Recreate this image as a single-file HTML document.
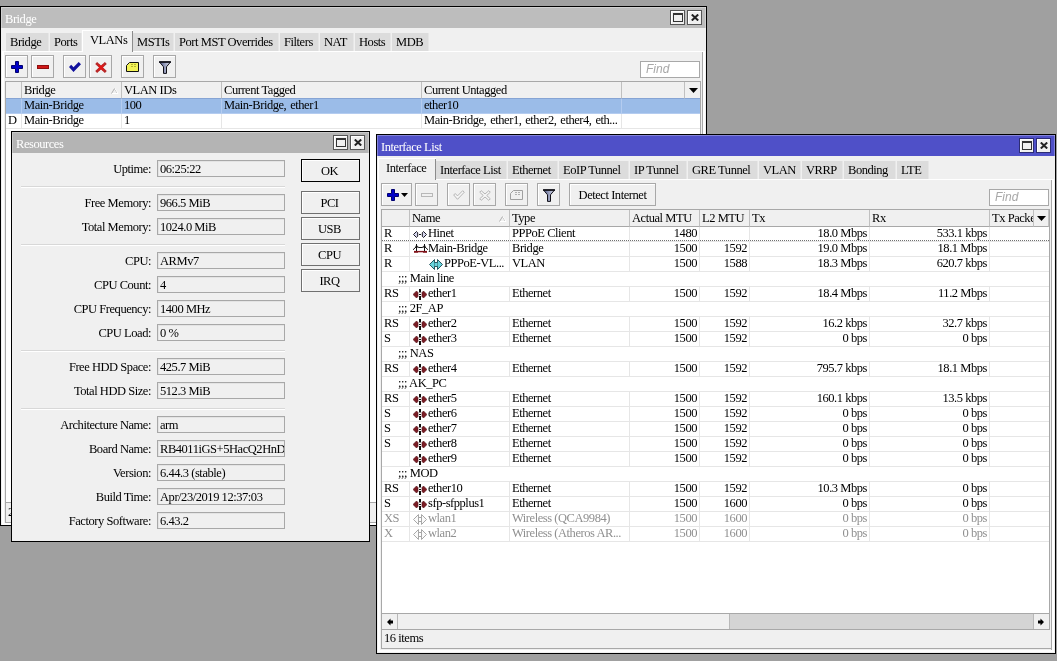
<!DOCTYPE html><html><head><meta charset="utf-8"><title>WinBox</title><style>
*{box-sizing:border-box;margin:0;padding:0}
html,body{width:1057px;height:661px;overflow:hidden;background:#a0a0a0}
body{font-family:"Liberation Serif",serif;font-size:12.5px;letter-spacing:-0.45px;color:#000;position:relative;line-height:15px;will-change:transform}
.a{position:absolute;white-space:nowrap}
.win{position:absolute;background:#f0f0f0;border:1px solid #000;overflow:hidden}
.tb{position:absolute;left:0;top:0;right:0;height:21px;box-shadow:inset 1px 1px 0 rgba(255,255,255,.3),inset -1px 0 0 rgba(255,255,255,.3);background:#bdbdbd;color:#fff;padding-left:4px;padding-top:1px;line-height:23px}
.tb.act{background:#4f50c8}
.actw .wb{border-color:#2c2c74}
.wb{position:absolute;width:15px;height:15px;border:1px solid #555;background:#f0f0f0;box-shadow:inset 1px 1px 0 #fff}
.tab{position:absolute;background:#dcdcdc;height:18px;line-height:18px;text-align:left;padding-left:4px;border-right:1px solid #e6e6e6;overflow:hidden}
.tab.on{background:#f0f0f0;border:none;border-top:1px solid #fff;border-left:1px solid #fff;height:22px;line-height:19px;padding-left:7px;z-index:2}
.tab.on i{position:absolute;right:0;top:0;width:1px;height:21px;background:#8c8c8c}
.btn{position:absolute;background:#f0f0f0;border:1px solid #a8a8a8;box-shadow:inset 1px 1px 0 #fff}
.find{position:absolute;background:#fff;border:1px solid #a8a8a8;font-family:"Liberation Sans",sans-serif;font-style:italic;color:#a8a8a8;font-size:12px;letter-spacing:0;padding-left:5px;line-height:15px}
.tbl{position:absolute;background:#fff;border:1px solid #a8a8a8;overflow:hidden}
.hd{position:absolute;top:0;height:16px;background:#f0f0f0;border-right:1px solid #c0c0c0;border-bottom:1px solid #c0c0c0;line-height:16px;padding-left:2px;overflow:hidden;white-space:nowrap}
.c{position:absolute;height:15px;line-height:13px;white-space:nowrap;overflow:hidden;border-right:1px solid #e6e6e6;border-bottom:1px solid #e6e6e6;padding-left:2px}
.c.r{text-align:right;padding-right:2px;padding-left:0}
.lbl{position:absolute;text-align:right;white-space:nowrap;line-height:17px;height:17px}
.fld{position:absolute;height:17px;border:1px solid #a8a8a8;background:#f0f0f0;line-height:15px;padding-left:2px;padding-top:1px;white-space:nowrap;overflow:hidden;box-shadow:inset 1px 1px 0 #e4e4e4}
.sep{position:absolute;height:2px;border-top:1px solid #d8d8d8;border-bottom:1px solid #fff}
.dis{color:#909090}
</style></head><body>
<div class="win" style="left:0;top:6px;width:707px;height:520px">
<div class="tb">Bridge</div>
<div class="wb" style="left:669px;top:3px"><svg class="a" style="left:2px;top:2px" width="10" height="9" viewBox="0 0 10 9"><rect x="0.5" y="1" width="9" height="7.5" fill="none" stroke="#333"/><rect x="0" y="0" width="10" height="2" fill="#333"/></svg></div><div class="wb" style="left:686px;top:3px"><svg class="a" style="left:3px;top:3px" width="8" height="7" viewBox="0 0 8 7"><path d="M0.8 0.5 L7.2 6.5 M7.2 0.5 L0.8 6.5" stroke="#222" stroke-width="2"/></svg></div>
<div class="tab" style="left:5px;top:26px;width:43px">Bridge</div><div class="tab" style="left:49px;top:26px;width:32px">Ports</div><div class="tab on" style="left:81px;top:23px;width:51px">VLANs<i></i></div><div class="tab" style="left:132px;top:26px;width:41px">MSTIs</div><div class="tab" style="left:174px;top:26px;width:104px">Port MST Overrides</div><div class="tab" style="left:279px;top:26px;width:39px">Filters</div><div class="tab" style="left:319px;top:26px;width:34px">NAT</div><div class="tab" style="left:354px;top:26px;width:36px">Hosts</div><div class="tab" style="left:391px;top:26px;width:37px">MDB</div>
<div class="a" style="left:1px;top:44px;width:703px;height:474px;border:2px solid #fff;border-top-width:1px;box-shadow:inset -1px 0 0 #a8a8a8"></div>
<div class="btn" style="left:4px;top:48px;width:23px;height:23px"><svg class="a" style="left:5px;top:5px" width="12" height="12" viewBox="0 0 12 12"><path d="M4.5 0.5h3v4h4v3h-4v4h-3v-4h-4v-3h4z" fill="#0000c8" stroke="#000070" stroke-width="1"/></svg></div>
<div class="btn" style="left:30px;top:48px;width:23px;height:23px"><svg class="a" style="left:5px;top:9px" width="12" height="4" viewBox="0 0 12 4"><rect x="0" y="0" width="12" height="4" fill="#d01818"/><rect x="0.5" y="0.5" width="11" height="3" fill="none" stroke="#901010" stroke-width="1"/></svg></div>
<div class="btn" style="left:62px;top:48px;width:23px;height:23px"><svg class="a" style="left:5px;top:6px" width="12" height="10" viewBox="0 0 12 10"><path d="M0 5 L2.2 2.8 L4.5 5.2 L9.7 0 L12 2.2 L4.5 10 Z" fill="#10109c"/></svg></div>
<div class="btn" style="left:88px;top:48px;width:23px;height:23px"><svg class="a" style="left:5px;top:6px" width="12" height="11" viewBox="0 0 12 11"><path d="M2.1 0 L6 3.6 L9.9 0 L11.8 2 L8 5.5 L11.8 9 L9.9 11 L6 7.4 L2.1 11 L0.2 9 L4 5.5 L0.2 2 Z" fill="#b82828"/><path d="M3.5 3 L8.5 8 M8.5 3 L3.5 8" stroke="#e01818" stroke-width="2"/></svg></div>
<div class="btn" style="left:120px;top:48px;width:23px;height:23px"><svg class="a" style="left:4px;top:6px" width="13" height="10" viewBox="0 0 13 10"><path d="M3.5 0.5 H12.5 V9.5 H0.5 V3.5 Z" fill="#f4f458" stroke="#101010" stroke-width="1"/><path d="M5 2.5 H10.5 M5 4.5 H10.5" stroke="#b8b830" stroke-width="1" stroke-dasharray="2 1"/></svg></div>
<div class="btn" style="left:152px;top:48px;width:23px;height:23px"><svg class="a" style="left:5px;top:5px" width="13" height="13" viewBox="0 0 13 13"><defs><linearGradient id="fg1" x1="0" x2="1" y1="0" y2="0"><stop offset="0.2" stop-color="#6c749c"/><stop offset="0.8" stop-color="#c4c8dc"/></linearGradient></defs><path d="M0.5 1 H11.5 L7.5 5.8 V12.4 H4.5 V5.8 Z" fill="url(#fg1)" stroke="#101018" stroke-width="1" stroke-linejoin="round"/><path d="M0 1 H12" stroke="#101018" stroke-width="1.6"/></svg></div>
<div class="find" style="left:639px;top:54px;width:60px;height:17px">Find</div>
<div class="tbl" style="left:4px;top:74px;width:696px;height:422px">
<div class="hd" style="left:0px;width:16px;height:17px;border-bottom-color:#86a4d4;z-index:2"></div>
<div class="hd" style="left:16px;width:100px;height:17px;border-bottom-color:#86a4d4;z-index:2">Bridge</div>
<div class="hd" style="left:116px;width:100px;height:17px;border-bottom-color:#86a4d4;z-index:2">VLAN IDs</div>
<div class="hd" style="left:216px;width:200px;height:17px;border-bottom-color:#86a4d4;z-index:2">Current Tagged</div>
<div class="hd" style="left:416px;width:200px;height:17px;border-bottom-color:#86a4d4;z-index:2">Current Untagged</div>
<div class="hd" style="left:616px;width:63px;height:17px;border-bottom-color:#86a4d4;z-index:2"></div>
<div class="hd" style="left:679px;width:16px;height:17px;border-bottom-color:#86a4d4;z-index:2"></div>
<svg class="a" style="left:105px;top:6px;z-index:3" width="8" height="6" viewBox="0 0 8 6"><path d="M0.5 5.5 L3.5 0.5 L6.5 5.5" fill="none" stroke="#b0b0b0"/><path d="M4 0.5 L7 5.5 H1" fill="none" stroke="#fff"/></svg>
<svg class="a" style="left:683px;top:6px;z-index:3" width="9" height="5" viewBox="0 0 9 5"><path d="M0 0h9l-4.5 5z" fill="#000"/></svg>
<div class="a" style="left:0;top:17px;width:695px;height:15px;background:#9bbce8"></div>
<div class="c" style="left:0px;top:17px;width:16px;word-spacing:1.2px;background:#9bbce8;border-color:#b4ccf0;"></div>
<div class="c" style="left:16px;top:17px;width:100px;word-spacing:1.2px;background:#9bbce8;border-color:#b4ccf0;">Main-Bridge</div>
<div class="c" style="left:116px;top:17px;width:100px;word-spacing:1.2px;background:#9bbce8;border-color:#b4ccf0;">100</div>
<div class="c" style="left:216px;top:17px;width:200px;word-spacing:1.2px;background:#9bbce8;border-color:#b4ccf0;">Main-Bridge, ether1</div>
<div class="c" style="left:416px;top:17px;width:200px;word-spacing:1.2px;background:#9bbce8;border-color:#b4ccf0;">ether10</div>
<div class="c" style="left:616px;top:17px;width:80px;word-spacing:1.2px;background:#9bbce8;border-color:#b4ccf0;"></div>
<div class="a" style="left:0;top:32px;width:695px;height:15px;"></div>
<div class="c" style="left:0px;top:32px;width:16px;word-spacing:1.2px;">D</div>
<div class="c" style="left:16px;top:32px;width:100px;word-spacing:1.2px;">Main-Bridge</div>
<div class="c" style="left:116px;top:32px;width:100px;word-spacing:1.2px;">1</div>
<div class="c" style="left:216px;top:32px;width:200px;word-spacing:1.2px;"></div>
<div class="c" style="left:416px;top:32px;width:200px;word-spacing:1.2px;">Main-Bridge, ether1, ether2, ether4, eth...</div>
<div class="c" style="left:616px;top:32px;width:80px;word-spacing:1.2px;"></div>
</div>
<div class="a" style="left:4px;top:496px;width:698px;height:20px;border-left:1px solid #a8a8a8;border-bottom:1px solid #a8a8a8;padding-left:2px;line-height:18px">2 items</div>
</div>
<div class="win" style="left:11px;top:131px;width:359px;height:411px;">
<div class="tb" style="background:#b4b4b4">Resources</div>
<div class="wb" style="left:321px;top:3px"><svg class="a" style="left:2px;top:2px" width="10" height="9" viewBox="0 0 10 9"><rect x="0.5" y="1" width="9" height="7.5" fill="none" stroke="#333"/><rect x="0" y="0" width="10" height="2" fill="#333"/></svg></div><div class="wb" style="left:338px;top:3px"><svg class="a" style="left:3px;top:3px" width="8" height="7" viewBox="0 0 8 7"><path d="M0.8 0.5 L7.2 6.5 M7.2 0.5 L0.8 6.5" stroke="#222" stroke-width="2"/></svg></div>
<div class="lbl" style="left:8px;width:131px;top:29px">Uptime:</div>
<div class="fld" style="left:145px;width:128px;top:28px">06:25:22</div>
<div class="lbl" style="left:8px;width:131px;top:63px">Free Memory:</div>
<div class="fld" style="left:145px;width:128px;top:62px">966.5 MiB</div>
<div class="lbl" style="left:8px;width:131px;top:87px">Total Memory:</div>
<div class="fld" style="left:145px;width:128px;top:86px">1024.0 MiB</div>
<div class="lbl" style="left:8px;width:131px;top:121px">CPU:</div>
<div class="fld" style="left:145px;width:128px;top:120px">ARMv7</div>
<div class="lbl" style="left:8px;width:131px;top:145px">CPU Count:</div>
<div class="fld" style="left:145px;width:128px;top:144px">4</div>
<div class="lbl" style="left:8px;width:131px;top:169px">CPU Frequency:</div>
<div class="fld" style="left:145px;width:128px;top:168px">1400 MHz</div>
<div class="lbl" style="left:8px;width:131px;top:193px">CPU Load:</div>
<div class="fld" style="left:145px;width:128px;top:192px">0 %</div>
<div class="lbl" style="left:8px;width:131px;top:227px">Free HDD Space:</div>
<div class="fld" style="left:145px;width:128px;top:226px">425.7 MiB</div>
<div class="lbl" style="left:8px;width:131px;top:251px">Total HDD Size:</div>
<div class="fld" style="left:145px;width:128px;top:250px">512.3 MiB</div>
<div class="lbl" style="left:8px;width:131px;top:285px">Architecture Name:</div>
<div class="fld" style="left:145px;width:128px;top:284px">arm</div>
<div class="lbl" style="left:8px;width:131px;top:309px">Board Name:</div>
<div class="fld" style="left:145px;width:128px;top:308px">RB4011iGS+5HacQ2HnD</div>
<div class="lbl" style="left:8px;width:131px;top:333px">Version:</div>
<div class="fld" style="left:145px;width:128px;top:332px">6.44.3 (stable)</div>
<div class="lbl" style="left:8px;width:131px;top:357px">Build Time:</div>
<div class="fld" style="left:145px;width:128px;top:356px">Apr/23/2019 12:37:03</div>
<div class="lbl" style="left:8px;width:131px;top:381px">Factory Software:</div>
<div class="fld" style="left:145px;width:128px;top:380px">6.43.2</div>
<div class="sep" style="left:9px;width:264px;top:54px"></div>
<div class="sep" style="left:9px;width:264px;top:112px"></div>
<div class="sep" style="left:9px;width:264px;top:218px"></div>
<div class="sep" style="left:9px;width:264px;top:276px"></div>
<div class="btn" style="left:289px;top:27px;width:59px;height:23px;text-align:center;line-height:21px;padding-top:1px;padding-right:2px;border-color:#000;">OK</div>
<div class="btn" style="left:289px;top:59px;width:59px;height:23px;text-align:center;line-height:21px;padding-top:1px;padding-right:2px;border-color:#707070;">PCI</div>
<div class="btn" style="left:289px;top:85px;width:59px;height:23px;text-align:center;line-height:21px;padding-top:1px;padding-right:2px;border-color:#707070;">USB</div>
<div class="btn" style="left:289px;top:111px;width:59px;height:23px;text-align:center;line-height:21px;padding-top:1px;padding-right:2px;border-color:#707070;">CPU</div>
<div class="btn" style="left:289px;top:137px;width:59px;height:23px;text-align:center;line-height:21px;padding-top:1px;padding-right:2px;border-color:#707070;">IRQ</div>
</div>
<div class="win actw" style="left:376px;top:134px;width:680px;height:520px">
<div class="tb act">Interface List</div>
<div class="wb" style="left:642px;top:3px"><svg class="a" style="left:2px;top:2px" width="10" height="9" viewBox="0 0 10 9"><rect x="0.5" y="1" width="9" height="7.5" fill="none" stroke="#333"/><rect x="0" y="0" width="10" height="2" fill="#333"/></svg></div><div class="wb" style="left:659px;top:3px"><svg class="a" style="left:3px;top:3px" width="8" height="7" viewBox="0 0 8 7"><path d="M0.8 0.5 L7.2 6.5 M7.2 0.5 L0.8 6.5" stroke="#222" stroke-width="2"/></svg></div>
<div class="tab on" style="left:1px;top:23px;width:58px">Interface<i></i></div><div class="tab" style="left:59px;top:26px;width:71px">Interface List</div><div class="tab" style="left:131px;top:26px;width:50px">Ethernet</div><div class="tab" style="left:182px;top:26px;width:70px">EoIP Tunnel</div><div class="tab" style="left:253px;top:26px;width:57px">IP Tunnel</div><div class="tab" style="left:311px;top:26px;width:70px">GRE Tunnel</div><div class="tab" style="left:382px;top:26px;width:42px">VLAN</div><div class="tab" style="left:425px;top:26px;width:41px">VRRP</div><div class="tab" style="left:467px;top:26px;width:52px">Bonding</div><div class="tab" style="left:520px;top:26px;width:32px">LTE</div>
<div class="a" style="left:1px;top:44px;width:676px;height:473px;border:2px solid #fff;border-top-width:1px;box-shadow:inset -1px 0 0 #a8a8a8"></div>
<div class="btn" style="left:4px;top:48px;width:31px;height:23px"><svg class="a" style="left:5px;top:5px" width="12" height="12" viewBox="0 0 12 12"><path d="M4.5 0.5h3v4h4v3h-4v4h-3v-4h-4v-3h4z" fill="#0000c8" stroke="#000070" stroke-width="1"/></svg><svg class="a" style="left:19px;top:9px" width="7" height="4" viewBox="0 0 7 4"><path d="M0 0h7l-3.5 4z" fill="#000"/></svg></div>
<div class="btn" style="left:38px;top:48px;width:23px;height:23px"><svg class="a" style="left:5px;top:9px" width="12" height="4" viewBox="0 0 12 4"><rect x="0.5" y="0.5" width="11" height="3" fill="#f0f0f0" stroke="#b8b8b8"/></svg></div>
<div class="btn" style="left:70px;top:48px;width:23px;height:23px"><svg class="a" style="left:5px;top:6px" width="12" height="10" viewBox="0 0 12 10"><path d="M0.7 5 L2.2 3.5 L4.5 5.9 L9.7 0.7 L11.3 2.2 L4.5 9.3 Z" fill="#f6f6f6" stroke="#b4b4b4" stroke-width="1"/></svg></div>
<div class="btn" style="left:96px;top:48px;width:23px;height:23px"><svg class="a" style="left:5px;top:6px" width="12" height="11" viewBox="0 0 12 11"><path d="M2.2 0.7 L6 4 L9.8 0.7 L11.3 2.2 L7.7 5.5 L11.3 8.8 L9.8 10.3 L6 7 L2.2 10.3 L0.7 8.8 L4.3 5.5 L0.7 2.2 Z" fill="#f6f6f6" stroke="#b4b4b4" stroke-width="1"/></svg></div>
<div class="btn" style="left:128px;top:48px;width:23px;height:23px"><svg class="a" style="left:4px;top:6px" width="13" height="10" viewBox="0 0 13 10"><path d="M3.5 0.5 H12.5 V9.5 H0.5 V3.5 Z" fill="#f0f0f0" stroke="#a0a0a0" stroke-width="1"/><path d="M5 2.5 H10.5 M5 4.5 H10.5" stroke="#b0b0b0" stroke-width="1" stroke-dasharray="2 1"/></svg></div>
<div class="btn" style="left:160px;top:48px;width:23px;height:23px"><svg class="a" style="left:5px;top:5px" width="13" height="13" viewBox="0 0 13 13"><defs><linearGradient id="fg2" x1="0" x2="1" y1="0" y2="0"><stop offset="0.2" stop-color="#6c749c"/><stop offset="0.8" stop-color="#c4c8dc"/></linearGradient></defs><path d="M0.5 1 H11.5 L7.5 5.8 V12.4 H4.5 V5.8 Z" fill="url(#fg2)" stroke="#101018" stroke-width="1" stroke-linejoin="round"/><path d="M0 1 H12" stroke="#101018" stroke-width="1.6"/></svg></div>
<div class="btn" style="left:192px;top:48px;width:87px;height:23px;text-align:center;line-height:21px;padding-top:1px">Detect Internet</div>
<div class="find" style="left:612px;top:54px;width:60px;height:17px">Find</div>
<div class="tbl" style="left:4px;top:74px;width:669px;height:421px">
<div class="hd" style="left:0px;width:28px;height:17px;line-height:16px;border-bottom-color:#a8a8a8;z-index:2"></div>
<div class="hd" style="left:28px;width:100px;height:17px;line-height:16px;border-bottom-color:#a8a8a8;z-index:2">Name</div>
<div class="hd" style="left:128px;width:120px;height:17px;line-height:16px;border-bottom-color:#a8a8a8;z-index:2">Type</div>
<div class="hd" style="left:248px;width:70px;height:17px;line-height:16px;border-bottom-color:#a8a8a8;z-index:2">Actual MTU</div>
<div class="hd" style="left:318px;width:50px;height:17px;line-height:16px;border-bottom-color:#a8a8a8;z-index:2">L2 MTU</div>
<div class="hd" style="left:368px;width:120px;height:17px;line-height:16px;border-bottom-color:#a8a8a8;z-index:2">Tx</div>
<div class="hd" style="left:488px;width:120px;height:17px;line-height:16px;border-bottom-color:#a8a8a8;z-index:2">Rx</div>
<div class="hd" style="left:608px;width:60px;height:17px;line-height:16px;border-bottom-color:#a8a8a8;z-index:2">Tx Packe</div>
<div class="hd" style="left:651px;width:16px;height:17px;border-left:1px solid #c0c0c0;border-bottom-color:#a8a8a8;z-index:2"></div>
<svg class="a" style="left:117px;top:6px;z-index:3" width="8" height="6" viewBox="0 0 8 6"><path d="M0.5 5.5 L3.5 0.5 L6.5 5.5" fill="none" stroke="#b0b0b0"/><path d="M4 0.5 L7 5.5 H1" fill="none" stroke="#fff"/></svg>
<svg class="a" style="left:655px;top:6px;z-index:3" width="9" height="5" viewBox="0 0 9 5"><path d="M0 0h9l-4.5 5z" fill="#000"/></svg>
<div class="c" style="left:0px;top:17px;width:28px;">R</div>
<div class="c" style="left:28px;top:17px;width:100px;padding-left:18px;"><svg class="a" style="left:3px;top:4px" width="14" height="7" viewBox="0 0 14 7"><path d="M0.5 3.5 L3.5 0.5 L4.7 1.8 V5.2 L3.5 6.5 Z M13.5 3.5 L10.5 0.5 L9.3 1.8 V5.2 L10.5 6.5 Z" fill="#d8d8f0" stroke="#181820" stroke-width="1"/><path d="M6 3.5 H8" stroke="#181820" stroke-width="1"/></svg>Hinet</div>
<div class="c" style="left:128px;top:17px;width:120px;">PPPoE Client</div>
<div class="c r" style="left:248px;top:17px;width:70px;">1480</div>
<div class="c r" style="left:318px;top:17px;width:50px;"></div>
<div class="c r" style="left:368px;top:17px;width:120px;">18.0 Mbps</div>
<div class="c r" style="left:488px;top:17px;width:120px;">533.1 kbps</div>
<div class="c" style="left:608px;top:17px;width:60px;"></div>
<div class="c" style="left:0px;top:32px;width:28px;">R</div>
<div class="c" style="left:28px;top:32px;width:100px;padding-left:18px;"><svg class="a" style="left:3px;top:2px" width="16" height="9" viewBox="0 0 16 9"><path d="M1 7.6 H14" stroke="#801018" stroke-width="1.4"/><path d="M1 8.2 H5 M10 8.2 H14" stroke="#801018" stroke-width="1"/><path d="M3.5 0 V7 M11.5 0 V7 M3.5 2.5 L0 5.8 M11.5 2.5 L15 5.8 M3.5 2.5 L6 3.5 H9 L11.5 2.5" fill="none" stroke="#101010" stroke-width="1"/><path d="M3.5 1.8 V3.4 M11.5 1.8 V3.4" stroke="#101010" stroke-width="2"/></svg>Main-Bridge</div>
<div class="c" style="left:128px;top:32px;width:120px;">Bridge</div>
<div class="c r" style="left:248px;top:32px;width:70px;">1500</div>
<div class="c r" style="left:318px;top:32px;width:50px;">1592</div>
<div class="c r" style="left:368px;top:32px;width:120px;">19.0 Mbps</div>
<div class="c r" style="left:488px;top:32px;width:120px;">18.1 Mbps</div>
<div class="c" style="left:608px;top:32px;width:60px;"></div>
<div class="c" style="left:0px;top:47px;width:28px;">R</div>
<div class="c" style="left:28px;top:47px;width:100px;padding-left:34px;"><svg class="a" style="left:19px;top:2px" width="14" height="11" viewBox="0 0 14 11"><path d="M0.5 5.5 L5.5 0.5 V10.5 Z M13.5 5.5 L8.5 0.5 V10.5 Z" fill="#68d4dc" stroke="#285860" stroke-width="1"/><rect x="5.5" y="3.5" width="3" height="4" fill="#68d4dc"/><path d="M5.5 3.5 H8.5 M5.5 7.5 H8.5" stroke="#285860" stroke-width="1"/></svg>PPPoE-VL...</div>
<div class="c" style="left:128px;top:47px;width:120px;">VLAN</div>
<div class="c r" style="left:248px;top:47px;width:70px;">1500</div>
<div class="c r" style="left:318px;top:47px;width:50px;">1588</div>
<div class="c r" style="left:368px;top:47px;width:120px;">18.3 Mbps</div>
<div class="c r" style="left:488px;top:47px;width:120px;">620.7 kbps</div>
<div class="c" style="left:608px;top:47px;width:60px;"></div>
<div class="c" style="left:0;top:62px;width:668px;padding-left:16px">;;; Main line</div>
<div class="c" style="left:0px;top:77px;width:28px;">RS</div>
<div class="c" style="left:28px;top:77px;width:100px;padding-left:18px;"><svg class="a" style="left:3px;top:2px" width="14" height="11" viewBox="0 0 14 11"><path d="M0 5.5 L3.5 2 L5 3.5 V7.5 L3.5 9 Z M14 5.5 L10.5 2 L9 3.5 V7.5 L10.5 9 Z" fill="#7a1c24" stroke="#50101a" stroke-width="0.6"/><path d="M7 0 V3.5 M7 7 V11" stroke="#101010" stroke-width="2"/><path d="M6 5.5 H8" stroke="#101010" stroke-width="1"/></svg>ether1</div>
<div class="c" style="left:128px;top:77px;width:120px;">Ethernet</div>
<div class="c r" style="left:248px;top:77px;width:70px;">1500</div>
<div class="c r" style="left:318px;top:77px;width:50px;">1592</div>
<div class="c r" style="left:368px;top:77px;width:120px;">18.4 Mbps</div>
<div class="c r" style="left:488px;top:77px;width:120px;">11.2 Mbps</div>
<div class="c" style="left:608px;top:77px;width:60px;"></div>
<div class="c" style="left:0;top:92px;width:668px;padding-left:16px">;;; 2F_AP</div>
<div class="c" style="left:0px;top:107px;width:28px;">RS</div>
<div class="c" style="left:28px;top:107px;width:100px;padding-left:18px;"><svg class="a" style="left:3px;top:2px" width="14" height="11" viewBox="0 0 14 11"><path d="M0 5.5 L3.5 2 L5 3.5 V7.5 L3.5 9 Z M14 5.5 L10.5 2 L9 3.5 V7.5 L10.5 9 Z" fill="#7a1c24" stroke="#50101a" stroke-width="0.6"/><path d="M7 0 V3.5 M7 7 V11" stroke="#101010" stroke-width="2"/><path d="M6 5.5 H8" stroke="#101010" stroke-width="1"/></svg>ether2</div>
<div class="c" style="left:128px;top:107px;width:120px;">Ethernet</div>
<div class="c r" style="left:248px;top:107px;width:70px;">1500</div>
<div class="c r" style="left:318px;top:107px;width:50px;">1592</div>
<div class="c r" style="left:368px;top:107px;width:120px;">16.2 kbps</div>
<div class="c r" style="left:488px;top:107px;width:120px;">32.7 kbps</div>
<div class="c" style="left:608px;top:107px;width:60px;"></div>
<div class="c" style="left:0px;top:122px;width:28px;">S</div>
<div class="c" style="left:28px;top:122px;width:100px;padding-left:18px;"><svg class="a" style="left:3px;top:2px" width="14" height="11" viewBox="0 0 14 11"><path d="M0 5.5 L3.5 2 L5 3.5 V7.5 L3.5 9 Z M14 5.5 L10.5 2 L9 3.5 V7.5 L10.5 9 Z" fill="#7a1c24" stroke="#50101a" stroke-width="0.6"/><path d="M7 0 V3.5 M7 7 V11" stroke="#101010" stroke-width="2"/><path d="M6 5.5 H8" stroke="#101010" stroke-width="1"/></svg>ether3</div>
<div class="c" style="left:128px;top:122px;width:120px;">Ethernet</div>
<div class="c r" style="left:248px;top:122px;width:70px;">1500</div>
<div class="c r" style="left:318px;top:122px;width:50px;">1592</div>
<div class="c r" style="left:368px;top:122px;width:120px;">0 bps</div>
<div class="c r" style="left:488px;top:122px;width:120px;">0 bps</div>
<div class="c" style="left:608px;top:122px;width:60px;"></div>
<div class="c" style="left:0;top:137px;width:668px;padding-left:16px">;;; NAS</div>
<div class="c" style="left:0px;top:152px;width:28px;">RS</div>
<div class="c" style="left:28px;top:152px;width:100px;padding-left:18px;"><svg class="a" style="left:3px;top:2px" width="14" height="11" viewBox="0 0 14 11"><path d="M0 5.5 L3.5 2 L5 3.5 V7.5 L3.5 9 Z M14 5.5 L10.5 2 L9 3.5 V7.5 L10.5 9 Z" fill="#7a1c24" stroke="#50101a" stroke-width="0.6"/><path d="M7 0 V3.5 M7 7 V11" stroke="#101010" stroke-width="2"/><path d="M6 5.5 H8" stroke="#101010" stroke-width="1"/></svg>ether4</div>
<div class="c" style="left:128px;top:152px;width:120px;">Ethernet</div>
<div class="c r" style="left:248px;top:152px;width:70px;">1500</div>
<div class="c r" style="left:318px;top:152px;width:50px;">1592</div>
<div class="c r" style="left:368px;top:152px;width:120px;">795.7 kbps</div>
<div class="c r" style="left:488px;top:152px;width:120px;">18.1 Mbps</div>
<div class="c" style="left:608px;top:152px;width:60px;"></div>
<div class="c" style="left:0;top:167px;width:668px;padding-left:16px">;;; AK_PC</div>
<div class="c" style="left:0px;top:182px;width:28px;">RS</div>
<div class="c" style="left:28px;top:182px;width:100px;padding-left:18px;"><svg class="a" style="left:3px;top:2px" width="14" height="11" viewBox="0 0 14 11"><path d="M0 5.5 L3.5 2 L5 3.5 V7.5 L3.5 9 Z M14 5.5 L10.5 2 L9 3.5 V7.5 L10.5 9 Z" fill="#7a1c24" stroke="#50101a" stroke-width="0.6"/><path d="M7 0 V3.5 M7 7 V11" stroke="#101010" stroke-width="2"/><path d="M6 5.5 H8" stroke="#101010" stroke-width="1"/></svg>ether5</div>
<div class="c" style="left:128px;top:182px;width:120px;">Ethernet</div>
<div class="c r" style="left:248px;top:182px;width:70px;">1500</div>
<div class="c r" style="left:318px;top:182px;width:50px;">1592</div>
<div class="c r" style="left:368px;top:182px;width:120px;">160.1 kbps</div>
<div class="c r" style="left:488px;top:182px;width:120px;">13.5 kbps</div>
<div class="c" style="left:608px;top:182px;width:60px;"></div>
<div class="c" style="left:0px;top:197px;width:28px;">S</div>
<div class="c" style="left:28px;top:197px;width:100px;padding-left:18px;"><svg class="a" style="left:3px;top:2px" width="14" height="11" viewBox="0 0 14 11"><path d="M0 5.5 L3.5 2 L5 3.5 V7.5 L3.5 9 Z M14 5.5 L10.5 2 L9 3.5 V7.5 L10.5 9 Z" fill="#7a1c24" stroke="#50101a" stroke-width="0.6"/><path d="M7 0 V3.5 M7 7 V11" stroke="#101010" stroke-width="2"/><path d="M6 5.5 H8" stroke="#101010" stroke-width="1"/></svg>ether6</div>
<div class="c" style="left:128px;top:197px;width:120px;">Ethernet</div>
<div class="c r" style="left:248px;top:197px;width:70px;">1500</div>
<div class="c r" style="left:318px;top:197px;width:50px;">1592</div>
<div class="c r" style="left:368px;top:197px;width:120px;">0 bps</div>
<div class="c r" style="left:488px;top:197px;width:120px;">0 bps</div>
<div class="c" style="left:608px;top:197px;width:60px;"></div>
<div class="c" style="left:0px;top:212px;width:28px;">S</div>
<div class="c" style="left:28px;top:212px;width:100px;padding-left:18px;"><svg class="a" style="left:3px;top:2px" width="14" height="11" viewBox="0 0 14 11"><path d="M0 5.5 L3.5 2 L5 3.5 V7.5 L3.5 9 Z M14 5.5 L10.5 2 L9 3.5 V7.5 L10.5 9 Z" fill="#7a1c24" stroke="#50101a" stroke-width="0.6"/><path d="M7 0 V3.5 M7 7 V11" stroke="#101010" stroke-width="2"/><path d="M6 5.5 H8" stroke="#101010" stroke-width="1"/></svg>ether7</div>
<div class="c" style="left:128px;top:212px;width:120px;">Ethernet</div>
<div class="c r" style="left:248px;top:212px;width:70px;">1500</div>
<div class="c r" style="left:318px;top:212px;width:50px;">1592</div>
<div class="c r" style="left:368px;top:212px;width:120px;">0 bps</div>
<div class="c r" style="left:488px;top:212px;width:120px;">0 bps</div>
<div class="c" style="left:608px;top:212px;width:60px;"></div>
<div class="c" style="left:0px;top:227px;width:28px;">S</div>
<div class="c" style="left:28px;top:227px;width:100px;padding-left:18px;"><svg class="a" style="left:3px;top:2px" width="14" height="11" viewBox="0 0 14 11"><path d="M0 5.5 L3.5 2 L5 3.5 V7.5 L3.5 9 Z M14 5.5 L10.5 2 L9 3.5 V7.5 L10.5 9 Z" fill="#7a1c24" stroke="#50101a" stroke-width="0.6"/><path d="M7 0 V3.5 M7 7 V11" stroke="#101010" stroke-width="2"/><path d="M6 5.5 H8" stroke="#101010" stroke-width="1"/></svg>ether8</div>
<div class="c" style="left:128px;top:227px;width:120px;">Ethernet</div>
<div class="c r" style="left:248px;top:227px;width:70px;">1500</div>
<div class="c r" style="left:318px;top:227px;width:50px;">1592</div>
<div class="c r" style="left:368px;top:227px;width:120px;">0 bps</div>
<div class="c r" style="left:488px;top:227px;width:120px;">0 bps</div>
<div class="c" style="left:608px;top:227px;width:60px;"></div>
<div class="c" style="left:0px;top:242px;width:28px;"></div>
<div class="c" style="left:28px;top:242px;width:100px;padding-left:18px;"><svg class="a" style="left:3px;top:2px" width="14" height="11" viewBox="0 0 14 11"><path d="M0 5.5 L3.5 2 L5 3.5 V7.5 L3.5 9 Z M14 5.5 L10.5 2 L9 3.5 V7.5 L10.5 9 Z" fill="#7a1c24" stroke="#50101a" stroke-width="0.6"/><path d="M7 0 V3.5 M7 7 V11" stroke="#101010" stroke-width="2"/><path d="M6 5.5 H8" stroke="#101010" stroke-width="1"/></svg>ether9</div>
<div class="c" style="left:128px;top:242px;width:120px;">Ethernet</div>
<div class="c r" style="left:248px;top:242px;width:70px;">1500</div>
<div class="c r" style="left:318px;top:242px;width:50px;">1592</div>
<div class="c r" style="left:368px;top:242px;width:120px;">0 bps</div>
<div class="c r" style="left:488px;top:242px;width:120px;">0 bps</div>
<div class="c" style="left:608px;top:242px;width:60px;"></div>
<div class="c" style="left:0;top:257px;width:668px;padding-left:16px">;;; MOD</div>
<div class="c" style="left:0px;top:272px;width:28px;">RS</div>
<div class="c" style="left:28px;top:272px;width:100px;padding-left:18px;"><svg class="a" style="left:3px;top:2px" width="14" height="11" viewBox="0 0 14 11"><path d="M0 5.5 L3.5 2 L5 3.5 V7.5 L3.5 9 Z M14 5.5 L10.5 2 L9 3.5 V7.5 L10.5 9 Z" fill="#7a1c24" stroke="#50101a" stroke-width="0.6"/><path d="M7 0 V3.5 M7 7 V11" stroke="#101010" stroke-width="2"/><path d="M6 5.5 H8" stroke="#101010" stroke-width="1"/></svg>ether10</div>
<div class="c" style="left:128px;top:272px;width:120px;">Ethernet</div>
<div class="c r" style="left:248px;top:272px;width:70px;">1500</div>
<div class="c r" style="left:318px;top:272px;width:50px;">1592</div>
<div class="c r" style="left:368px;top:272px;width:120px;">10.3 Mbps</div>
<div class="c r" style="left:488px;top:272px;width:120px;">0 bps</div>
<div class="c" style="left:608px;top:272px;width:60px;"></div>
<div class="c" style="left:0px;top:287px;width:28px;">S</div>
<div class="c" style="left:28px;top:287px;width:100px;padding-left:18px;"><svg class="a" style="left:3px;top:2px" width="14" height="11" viewBox="0 0 14 11"><path d="M0 5.5 L3.5 2 L5 3.5 V7.5 L3.5 9 Z M14 5.5 L10.5 2 L9 3.5 V7.5 L10.5 9 Z" fill="#7a1c24" stroke="#50101a" stroke-width="0.6"/><path d="M7 0 V3.5 M7 7 V11" stroke="#101010" stroke-width="2"/><path d="M6 5.5 H8" stroke="#101010" stroke-width="1"/></svg>sfp-sfpplus1</div>
<div class="c" style="left:128px;top:287px;width:120px;">Ethernet</div>
<div class="c r" style="left:248px;top:287px;width:70px;">1500</div>
<div class="c r" style="left:318px;top:287px;width:50px;">1600</div>
<div class="c r" style="left:368px;top:287px;width:120px;">0 bps</div>
<div class="c r" style="left:488px;top:287px;width:120px;">0 bps</div>
<div class="c" style="left:608px;top:287px;width:60px;"></div>
<div class="c dis" style="left:0px;top:302px;width:28px;">XS</div>
<div class="c dis" style="left:28px;top:302px;width:100px;padding-left:18px;"><svg class="a" style="left:3px;top:2px" width="14" height="11" viewBox="0 0 14 11"><path d="M0.5 5.5 L5.5 0.5 V10.5 Z M13.5 5.5 L8.5 0.5 V10.5 Z" fill="#fafafa" stroke="#a8a8a8" stroke-width="1"/><path d="M5.5 3.5 H8.5 M5.5 7.5 H8.5" stroke="#a8a8a8" stroke-width="1"/></svg>wlan1</div>
<div class="c dis" style="left:128px;top:302px;width:120px;">Wireless (QCA9984)</div>
<div class="c r dis" style="left:248px;top:302px;width:70px;">1500</div>
<div class="c r dis" style="left:318px;top:302px;width:50px;">1600</div>
<div class="c r dis" style="left:368px;top:302px;width:120px;">0 bps</div>
<div class="c r dis" style="left:488px;top:302px;width:120px;">0 bps</div>
<div class="c dis" style="left:608px;top:302px;width:60px;"></div>
<div class="c dis" style="left:0px;top:317px;width:28px;">X</div>
<div class="c dis" style="left:28px;top:317px;width:100px;padding-left:18px;"><svg class="a" style="left:3px;top:2px" width="14" height="11" viewBox="0 0 14 11"><path d="M0.5 5.5 L5.5 0.5 V10.5 Z M13.5 5.5 L8.5 0.5 V10.5 Z" fill="#fafafa" stroke="#a8a8a8" stroke-width="1"/><path d="M5.5 3.5 H8.5 M5.5 7.5 H8.5" stroke="#a8a8a8" stroke-width="1"/></svg>wlan2</div>
<div class="c dis" style="left:128px;top:317px;width:120px;">Wireless (Atheros AR...</div>
<div class="c r dis" style="left:248px;top:317px;width:70px;">1500</div>
<div class="c r dis" style="left:318px;top:317px;width:50px;">1600</div>
<div class="c r dis" style="left:368px;top:317px;width:120px;">0 bps</div>
<div class="c r dis" style="left:488px;top:317px;width:120px;">0 bps</div>
<div class="c dis" style="left:608px;top:317px;width:60px;"></div>
<div class="a" style="left:0;top:30px;width:667px;height:1px;background:repeating-linear-gradient(90deg,#707070 0 1px,#fff 1px 2px);z-index:1"></div>
<div class="a" style="left:0;top:403px;width:667px;height:16px;background:#d4d4d4;border-top:1px solid #a8a8a8;z-index:4"></div>
<div class="a" style="left:0;top:404px;width:16px;height:15px;background:#f0f0f0;border-right:1px solid #b8b8b8;z-index:5"><svg class="a" style="left:5px;top:4px" width="6" height="8" viewBox="0 0 6 8"><path d="M0 4 L3.5 0.5 V2.5 H6 V5.5 H3.5 V7.5 Z" fill="#000"/></svg></div>
<div class="a" style="left:16px;top:404px;width:332px;height:15px;background:#f0f0f0;border-right:1px solid #b8b8b8;z-index:5"></div>
<div class="a" style="left:651px;top:404px;width:16px;height:15px;background:#f0f0f0;border-left:1px solid #b8b8b8;z-index:5"><svg class="a" style="left:4px;top:4px" width="6" height="8" viewBox="0 0 6 8"><path d="M6 4 L2.5 0.5 V2.5 H0 V5.5 H2.5 V7.5 Z" fill="#000"/></svg></div>
</div>
<div class="a" style="left:4px;top:495px;width:671px;height:19px;border-left:1px solid #a8a8a8;border-bottom:1px solid #a8a8a8;padding-left:2px;line-height:17px">16 items</div>
</div>
</body></html>
